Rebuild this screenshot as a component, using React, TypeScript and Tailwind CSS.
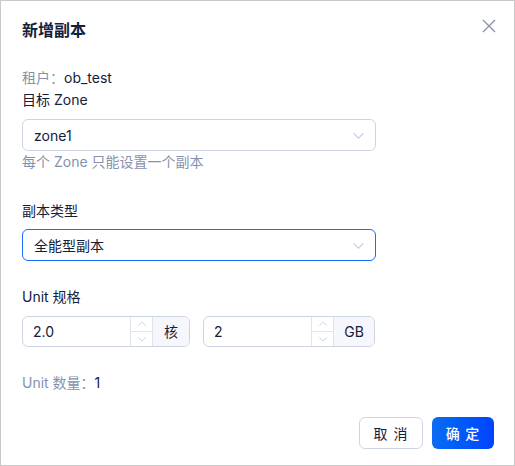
const font = { fontFamily: 'Inter, "Noto Sans CJK SC", sans-serif' };

const Chevron = ({ up = false, size = 12, color = '#c1cbe0' }: { up?: boolean; size?: number; color?: string }) => (
  <svg width={size} height={size} viewBox="0 0 12 12" fill="none">
    <path d={up ? 'M1.5 8 L6 3.5 L10.5 8' : 'M1.5 4 L6 8.5 L10.5 4'} stroke={color} strokeWidth="1" />
  </svg>
);

const Select = ({ value, focused = false }: { value: string; focused?: boolean }) => (
  <div
    className={`w-[354px] h-[32px] rounded-[6px] border flex items-center justify-between pl-[11px] pr-[10px] text-[14px] text-[#132039] ${
      focused ? 'border-[#1a6ef5]' : 'border-[#cdd5e4]'
    }`}
  >
    <span>{value}</span>
    <Chevron size={13} />
  </div>
);

const NumberInput = ({ value, unit, width, addonWidth }: { value: string; unit: string; width: string; addonWidth: string }) => (
  <div className={`${width} h-[31px] rounded-[6px] border border-[#cdd5e4] flex overflow-hidden text-[14px] text-[#132039]`}>
    <div className="flex-1 flex items-center pl-[10px]">{value}</div>
    <div className="w-[22px] flex flex-col border-l border-[#dfe4ee]">
      <div className="flex-1 flex items-center justify-center border-b border-[#dfe4ee]">
        <Chevron up size={10} />
      </div>
      <div className="flex-1 flex items-center justify-center">
        <Chevron size={10} />
      </div>
    </div>
    <div className={`${addonWidth} flex items-center justify-center bg-[#f5f7fc] border-l border-[#dfe4ee]`}>{unit}</div>
  </div>
);

export default function App() {
  return (
    <div style={font} className="w-[515px] h-[466px] border border-[#c9c9c9] bg-white relative">
      <svg className="absolute right-[18px] top-[18px]" width="14" height="14" viewBox="0 0 14 14" fill="none">
        <path d="M1 1 L13 13 M13 1 L1 13" stroke="#8592ad" strokeWidth="1.3" />
      </svg>

      <div className="pl-[21px] flex flex-col">
        {/* 标题 */}
        <div className="pt-[18px] text-[16px] leading-[22px] font-bold text-[#132039]">新增副本</div>

        {/* 租户 */}
        <div className="mt-[26px] text-[14px] leading-[22px]">
          <span className="text-[#8592ad]">租户：</span>
          <span className="text-[#132039]">ob_test</span>
        </div>
        <div className="text-[14px] leading-[22px] text-[#132039]">目标 Zone</div>
        <div className="mt-[8px]">
          <Select value="zone1" />
        </div>
        <div className="mt-[1px] text-[14px] leading-[20px] text-[#8592ad]">每个 Zone 只能设置一个副本</div>

        {/* 副本类型 */}
        <div className="mt-[28px] text-[14px] leading-[22px] text-[#132039]">副本类型</div>
        <div className="mt-[7px]">
          <Select value="全能型副本" focused />
        </div>

        {/* Unit 规格 */}
        <div className="mt-[25px] text-[14px] leading-[22px] text-[#132039]">Unit 规格</div>
        <div className="mt-[8px] flex gap-[13px]">
          <NumberInput value="2.0" unit="核" width="w-[168px]" addonWidth="w-[37px]" />
          <NumberInput value="2" unit="GB" width="w-[172px]" addonWidth="w-[41px]" />
        </div>

        <div className="mt-[25px] text-[14px] leading-[22px]">
          <span className="text-[#8592ad]">Unit 数量：</span>
          <span className="text-[#132039]">1</span>
        </div>

        {/* ボタン */}
        <div className="mt-[23px] pr-[20px] flex justify-end gap-[9px]">
          <button className="w-[64px] h-[32px] rounded-[6px] border border-[#cdd5e4] bg-white text-[14px] text-[#132039] tracking-[1px] whitespace-pre">
            取 消
          </button>
          <button className="w-[62px] h-[32px] rounded-[6px] bg-gradient-to-r from-[#0d6cf2] to-[#0042ff] text-[14px] text-white font-medium tracking-[1px] whitespace-pre">
            确 定
          </button>
        </div>
      </div>
    </div>
  );
}
